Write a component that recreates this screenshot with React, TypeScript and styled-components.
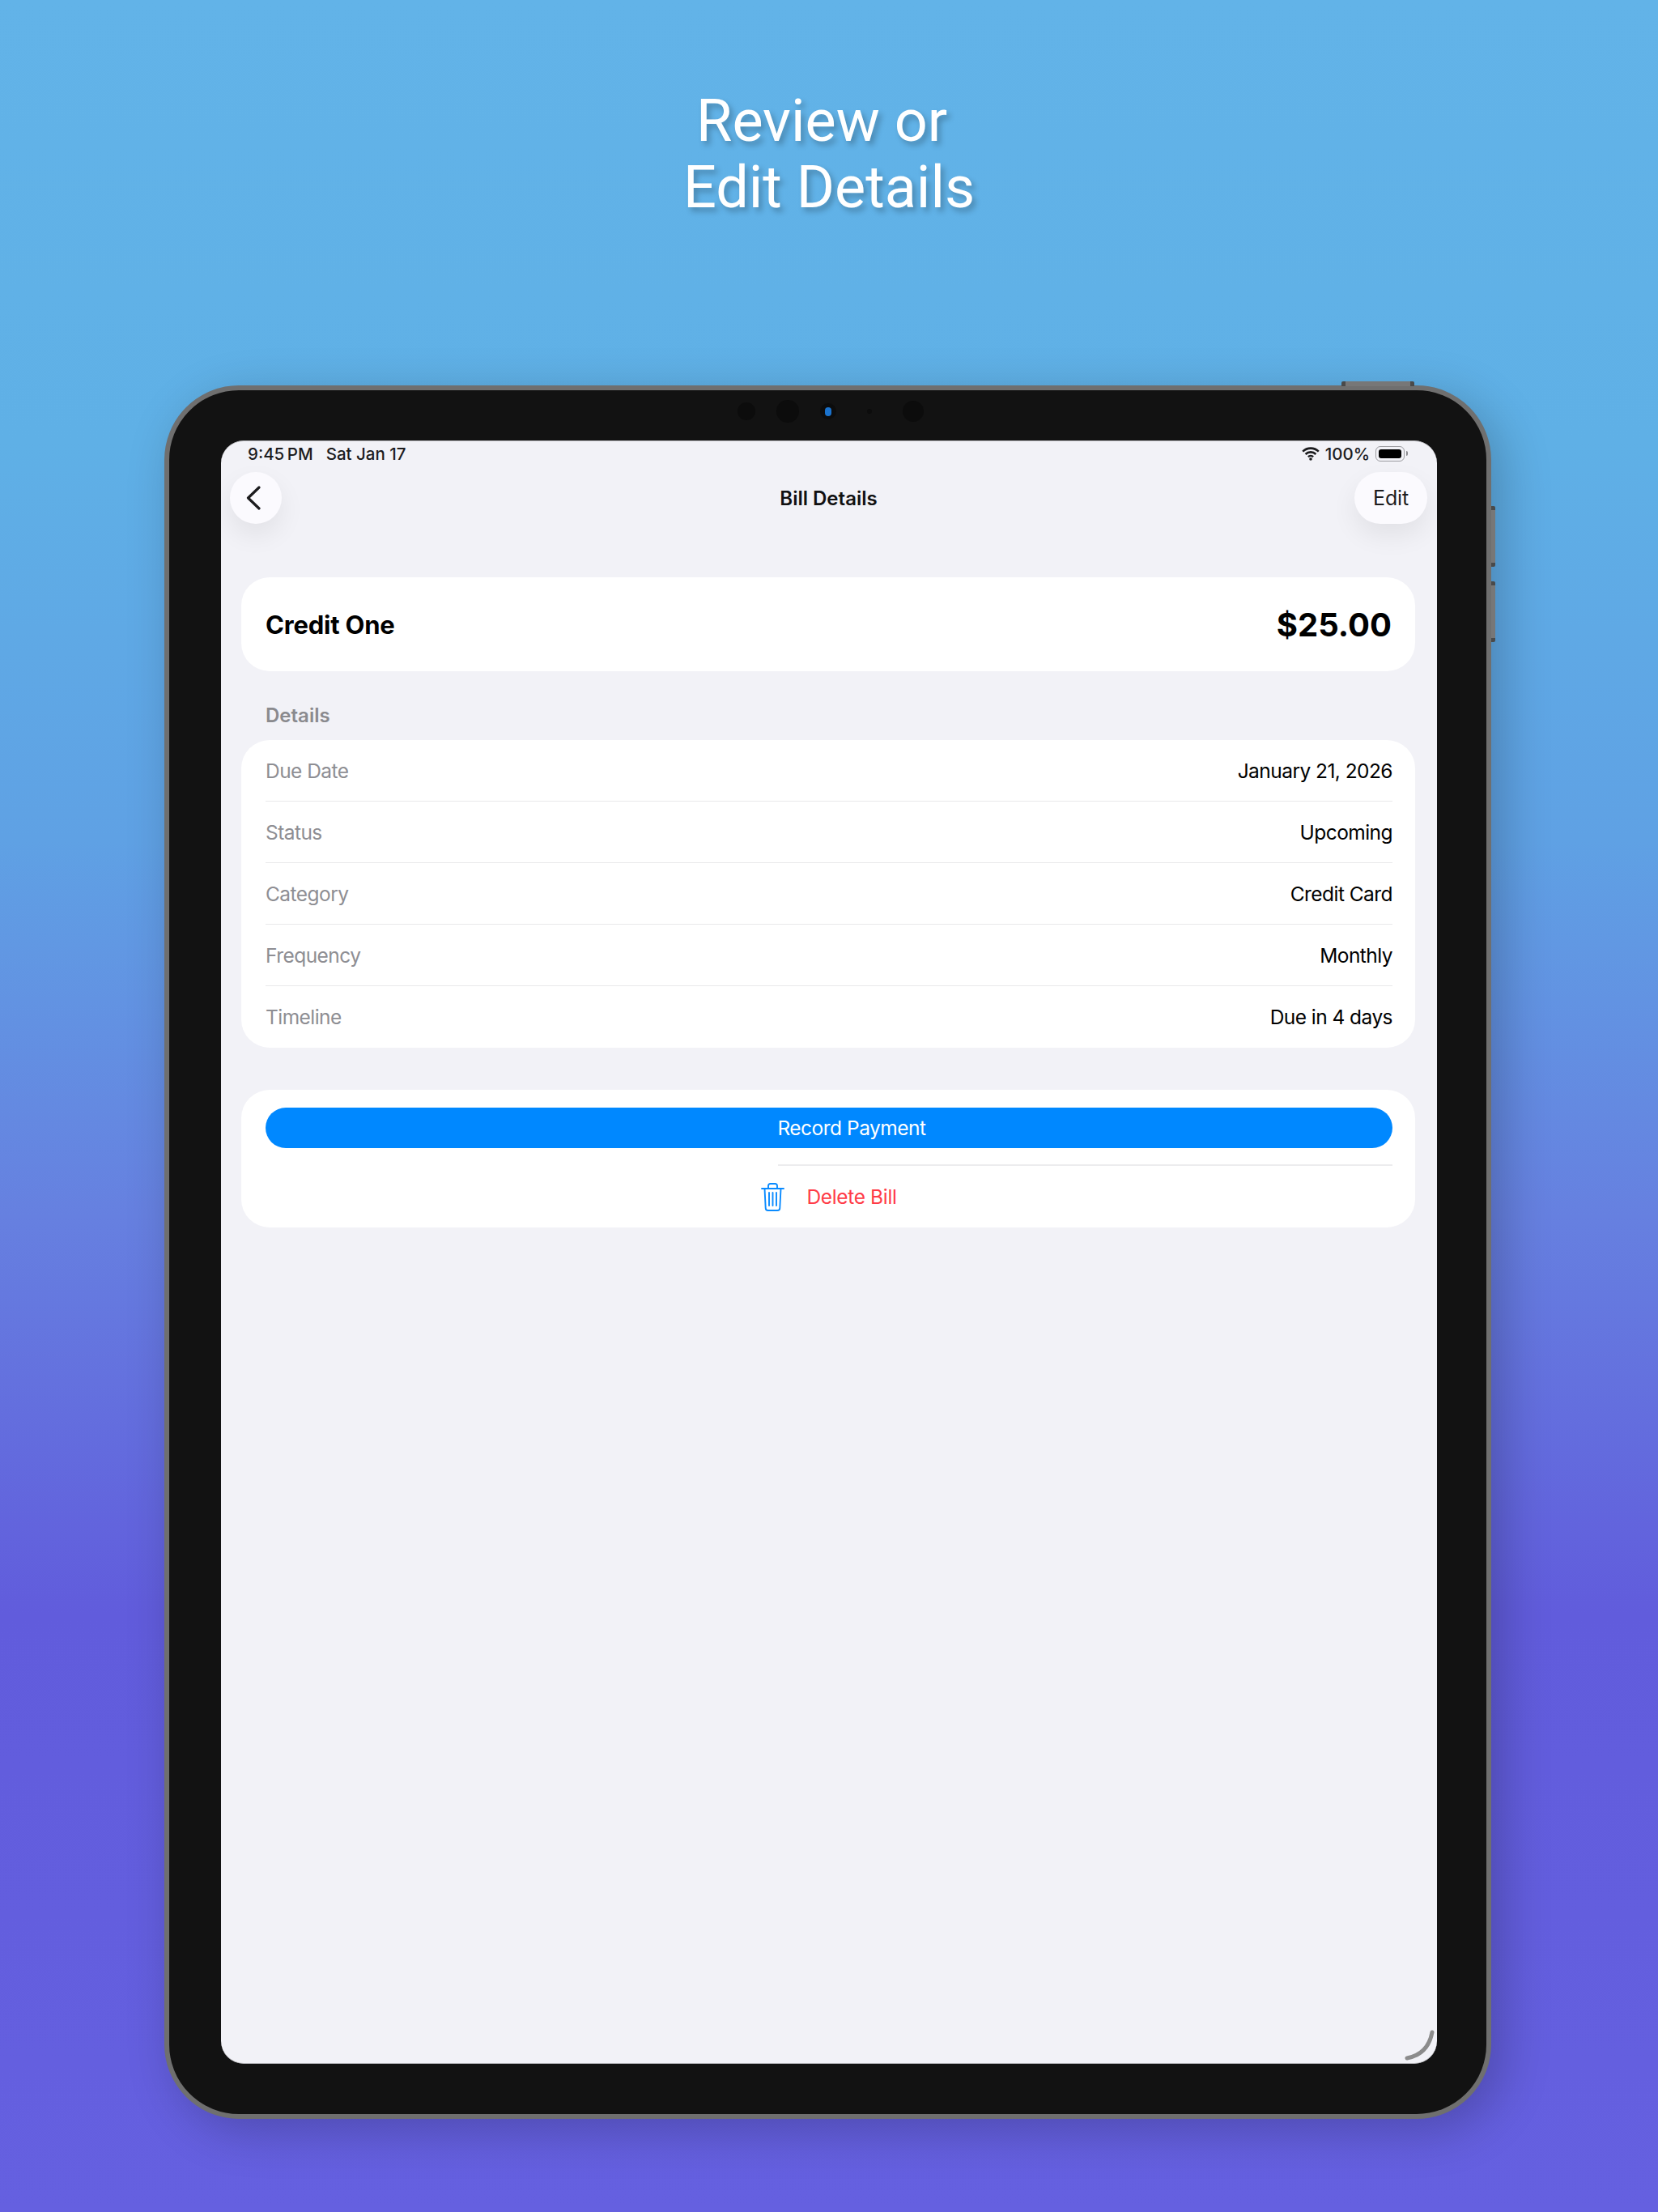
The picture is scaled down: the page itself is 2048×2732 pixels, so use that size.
import styled, { createGlobalStyle } from "styled-components";

const GlobalStyle = createGlobalStyle`
  html, body {
    margin: 0;
    padding: 0;
  }
  * {
    box-sizing: border-box;
  }
`;

const Page = styled.div`
  width: 2048px;
  height: 2732px;
  overflow: hidden;
  display: flex;
  flex-direction: column;
  align-items: center;
  padding-top: 109px;
  background: linear-gradient(
    180deg,
    #62b3e8 0%,
    #5fb0e6 20%,
    #5fa1e4 38%,
    #6680e0 55%,
    #615cdc 73%,
    #6560e0 100%
  );
  font-family: Inter, "Liberation Sans", sans-serif;
`;

const Headline = styled.h1`
  margin: 0 0 203px;
  font-family: Roboto, "Liberation Sans", sans-serif;
  font-size: 72px;
  line-height: 82px;
  font-weight: 400;
  color: #fff;
  text-align: center;
  text-shadow: 4px 5px 7px rgba(0, 0, 0, 0.25);
`;

const Device = styled.div`
  position: relative;
  width: 1639px;
  height: 2141px;
  margin-right: 3px;
  padding: 0 61px 62px 64px;
  background: #121212;
  border: 6px solid #6f6f6f;
  border-radius: 92px;
  box-shadow: 14px 14px 60px rgba(0, 0, 0, 0.22);
  display: flex;
  flex-direction: column;
`;

const TopButton = styled.div`
  position: absolute;
  top: -11px;
  right: 89px;
  width: 90px;
  height: 6px;
  background: linear-gradient(90deg, #4a4a4a 0 5px, #777 5px 85px, #4a4a4a 85px);
  border-radius: 2px 2px 0 0;
`;

const SideButton = styled.div<{ $top: number }>`
  position: absolute;
  top: ${({ $top }) => $top}px;
  right: -11px;
  width: 5px;
  height: 75px;
  background: linear-gradient(180deg, #4a4a4a 0 5px, #777 5px 70px, #4a4a4a 70px);
  border-radius: 0 2px 2px 0;
`;

const CameraBar = styled.div`
  height: 62px;
  flex-shrink: 0;
  padding: 0 0 10px 3px;
  display: flex;
  align-items: center;
  justify-content: center;
  gap: 26px;
`;

const Lens = styled.div<{ $size: number; $extra?: number }>`
  width: ${({ $size }) => $size}px;
  height: ${({ $size }) => $size}px;
  margin-left: ${({ $extra }) => $extra ?? 0}px;
  border-radius: 50%;
  background: #0c0c0c;
  display: flex;
  align-items: center;
  justify-content: center;
`;

const LensDot = styled.div`
  width: 8px;
  height: 11px;
  border-radius: 4px;
  background: #1a72cc;
  filter: blur(0.7px);
`;

const Screen = styled.div`
  position: relative;
  flex: 1;
  background: #f2f2f7;
  border-radius: 28px;
  border-top: 1px solid #b8b8bc;
  border-bottom: 1px solid #b8b8bc;
  overflow: hidden;
  display: flex;
  flex-direction: column;
`;

const StatusBar = styled.div`
  height: 38px;
  padding: 0 40px 7px 33px;
  display: flex;
  align-items: center;
  justify-content: space-between;
  font-size: 20.5px;
  font-weight: 500;
  color: #1c1c1e;
`;

const StatusGroup = styled.div<{ $gap: number }>`
  display: flex;
  align-items: center;
  gap: ${({ $gap }) => $gap}px;
`;

const Battery = styled.div`
  position: relative;
  width: 36px;
  height: 19px;
  padding: 3px;
  border: 1.5px solid #9c9ca0;
  border-radius: 6px;
  &::after {
    content: "";
    position: absolute;
    top: 5px;
    right: -5px;
    width: 2px;
    height: 6px;
    border-radius: 0 2px 2px 0;
    background: #8a8a8e;
  }
`;

const BatteryFill = styled.div`
  width: 100%;
  height: 100%;
  background: #000;
  border-radius: 3px;
`;

const NavBar = styled.div`
  height: 64px;
  margin-bottom: 66px;
  padding: 0 12px 0 11px;
  display: grid;
  grid-template-columns: 1fr auto 1fr;
  align-items: center;
`;

const NavPill = styled.div<{ $width: number; $end?: boolean }>`
  width: ${({ $width }) => $width}px;
  height: 64px;
  justify-self: ${({ $end }) => ($end ? "end" : "start")};
  border-radius: 32px;
  background: #fbfafe;
  box-shadow: 0 14px 32px rgba(0, 0, 0, 0.07);
  display: flex;
  align-items: center;
  justify-content: center;
  font-size: 25px;
  letter-spacing: -0.2px;
  color: #1c1c1e;
`;

const BackGlyph = styled.svg`
  margin-right: 6px;
`;

const NavTitle = styled.div`
  font-size: 24px;
  font-weight: 600;
  color: #111;
`;

const Content = styled.div`
  padding: 0 27px 0 25px;
  display: flex;
  flex-direction: column;
`;

const Card = styled.div`
  background: #fff;
  border-radius: 35px;
`;

const SummaryCard = styled(Card)`
  height: 116px;
  padding: 0 29px 0 30px;
  display: flex;
  align-items: center;
  justify-content: space-between;
  color: #000;
  font-weight: 700;
`;

const BillName = styled.div`
  font-size: 31px;
  letter-spacing: -0.2px;
`;

const BillAmount = styled.div`
  font-size: 40px;
`;

const SectionLabel = styled.div`
  height: 85px;
  padding: 40px 30px 0;
  font-size: 24px;
  line-height: 30px;
  font-weight: 600;
  color: #8a8a8e;
`;

const DetailRow = styled.div<{ $last?: boolean }>`
  height: 76px;
  margin: 0 28px 0 30px;
  display: flex;
  align-items: center;
  justify-content: space-between;
  font-size: 24.5px;
  letter-spacing: -0.55px;
  border-bottom: ${({ $last }) => ($last ? "none" : "1.5px solid #e8e8ea")};
`;

const DetailLabel = styled.span`
  color: #8e8e93;
`;

const DetailValue = styled.span`
  color: #000;
`;

const ActionCard = styled(Card)`
  height: 170px;
  margin-top: 52px;
  padding: 22px 28px 0 30px;
  display: flex;
  flex-direction: column;
`;

const PayButton = styled.div`
  height: 50px;
  flex-shrink: 0;
  padding-left: 56px;
  border-radius: 25px;
  background: #0088ff;
  color: #fff;
  font-size: 24.5px;
  letter-spacing: -0.5px;
  display: flex;
  align-items: center;
  justify-content: center;
`;

const ActionRule = styled.div`
  height: 2px;
  flex-shrink: 0;
  margin: 20px 0 0 633px;
  background: #ececee;
`;

const DeleteRow = styled.div`
  flex: 1;
  display: flex;
  align-items: center;
  justify-content: center;
  gap: 27px;
  color: #ff3b47;
  font-size: 24.5px;
  letter-spacing: -0.35px;
`;

const HomeArc = styled.svg`
  position: absolute;
  right: 0;
  bottom: 0;
`;

const details = [
  { label: "Due Date", value: "January 21, 2026" },
  { label: "Status", value: "Upcoming" },
  { label: "Category", value: "Credit Card" },
  { label: "Frequency", value: "Monthly" },
  { label: "Timeline", value: "Due in 4 days" },
];

const WifiIcon = () => (
  <svg width="22" height="17" viewBox="0 0 22 17" fill="none" stroke="#1c1c1e" strokeWidth="2.6">
    <path d="M1.2 5.600a14 14 0 0 1 19.600 0" />
    <path d="M4.600 9a9.200 9.200 0 0 1 12.800 0" />
    <path d="M7.900 12.200a4.500 4.500 0 0 1 6.200 0" />
    <circle cx="11" cy="15" r="1.8" fill="#1c1c1e" stroke="none" />
  </svg>
);

const BackIcon = () => (
  <BackGlyph width="20" height="30" viewBox="0 0 20 30" fill="none" stroke="#1c1c1e" strokeWidth="3.2" strokeLinecap="round" strokeLinejoin="round">
    <path d="M17 2 3.500 15 17 28" />
  </BackGlyph>
);

const TrashIcon = () => (
  <svg width="29" height="35" viewBox="0 0 29 35" fill="none" stroke="#0a8bff" strokeWidth="1.9" strokeLinecap="round" strokeLinejoin="round">
    <path d="M1 7h27" />
    <path d="M9 7V3.500A2.500 2.500 0 0 1 11.500 1h6A2.500 2.500 0 0 1 20 3.500V7" />
    <path d="M4.500 7l1.200 24a3 3 0 0 0 3 3h11.600a3 3 0 0 0 3-3l1.200-24" />
    <path d="M10 12v16M14.500 12v16M19 12v16" />
  </svg>
);

export default function App() {
  return (
    <Page>
      <GlobalStyle />
      <Headline>
        Review or{"\u00a0"}
        <br />
        Edit Details
      </Headline>

      <Device>
        <TopButton />
        <SideButton $top={143} />
        <SideButton $top={236} />

        <CameraBar>
          <Lens $size={22} />
          <Lens $size={28} />
          <Lens $size={20}>
            <LensDot />
          </Lens>
          <Lens $size={6} $extra={12} />
          <Lens $size={26} $extra={12} />
        </CameraBar>

        <Screen>
          <StatusBar>
            <StatusGroup $gap={16}>
              <span>9:45{"\u2009"}PM</span>
              <span>Sat Jan 17</span>
            </StatusGroup>
            <StatusGroup $gap={7}>
              <WifiIcon />
              <span>100%</span>
              <Battery>
                <BatteryFill />
              </Battery>
            </StatusGroup>
          </StatusBar>

          <NavBar>
            <NavPill $width={64}>
              <BackIcon />
            </NavPill>
            <NavTitle>Bill Details</NavTitle>
            <NavPill $width={90} $end>
              Edit
            </NavPill>
          </NavBar>

          <Content>
            <SummaryCard>
              <BillName>Credit One</BillName>
              <BillAmount>$25.00</BillAmount>
            </SummaryCard>

            <SectionLabel>Details</SectionLabel>
            <Card>
              {details.map((row, i) => (
                <DetailRow key={row.label} $last={i === details.length - 1}>
                  <DetailLabel>{row.label}</DetailLabel>
                  <DetailValue>{row.value}</DetailValue>
                </DetailRow>
              ))}
            </Card>

            <ActionCard>
              <PayButton>Record Payment</PayButton>
              <ActionRule />
              <DeleteRow>
                <TrashIcon />
                <span>Delete Bill</span>
              </DeleteRow>
            </ActionCard>
          </Content>

          <HomeArc width="40" height="44" viewBox="0 0 40 44" fill="none">
            <path d="M3 38Q29 33 34 6" stroke="#8c8c8c" strokeWidth="5" strokeLinecap="round" />
          </HomeArc>
        </Screen>
      </Device>
    </Page>
  );
}
